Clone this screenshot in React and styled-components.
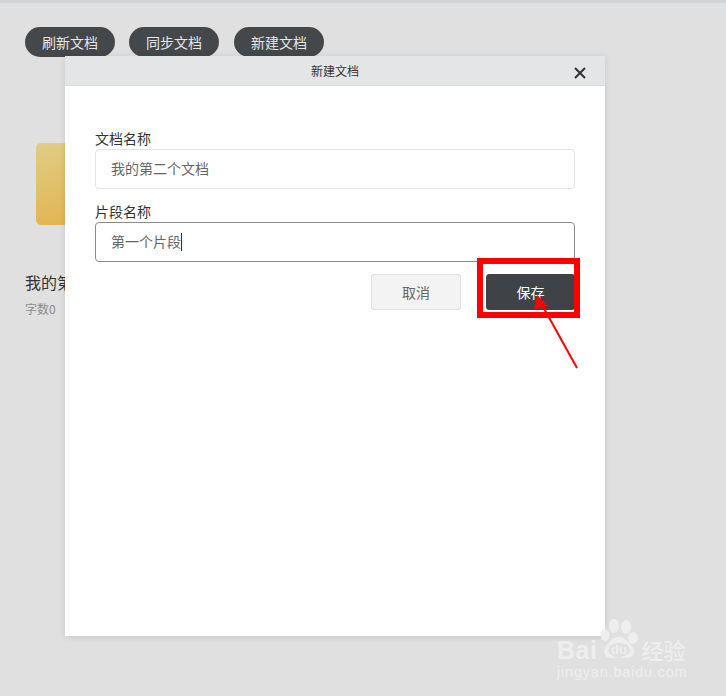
import styled, { createGlobalStyle } from "styled-components";

const cjk = `"Noto Sans CJK SC", "Liberation Sans", sans-serif`;

const GlobalStyle = createGlobalStyle`
  html, body {
    margin: 0;
    padding: 0;
    background: #e0e0e0;
    font-family: ${cjk};
  }
`;

const Page = styled.div`
  position: relative;
  width: 726px;
  height: 696px;
  overflow: hidden;
  background: #e0e0e0;
  border-top: 3px solid #d2d3d5;
  box-sizing: border-box;
`;

const Toolbar = styled.div`
  display: flex;
  gap: 14px;
  padding: 24px 0 0 25px;
`;

const PillButton = styled.button`
  width: 90px;
  height: 30px;
  padding: 0;
  border: 0;
  border-radius: 15px;
  background: #45484a;
  color: #e6e6e6;
  font: 14px/30px ${cjk};
  &:last-child {
    margin-left: 1px;
  }
`;

const DocCard = styled.div`
  padding: 86px 0 0 25px;
`;

const Cover = styled.div`
  width: 120px;
  height: 82px;
  margin-left: 11px;
  border-radius: 5px;
  background: linear-gradient(175deg, #e0cc84, #e2b34f);
`;

const DocTitle = styled.div`
  margin-top: 47px;
  font-size: 16px;
  line-height: 20px;
  color: #333;
`;

const DocMeta = styled.div`
  margin-top: 9px;
  font-size: 12px;
  line-height: 16px;
  color: #8c8c8c;
`;

const Modal = styled.div`
  position: absolute;
  left: 65px;
  top: 53px;
  width: 540px;
  height: 580px;
  background: #fff;
  box-shadow: 0 1px 6px rgba(0, 0, 0, 0.12);
`;

const ModalHeader = styled.div`
  position: relative;
  height: 29px;
  border-bottom: 1px solid #d9d9db;
  background: #e4e5e7;
  color: #333;
  font-size: 12px;
  line-height: 30px;
  text-align: center;
`;

const CloseIcon = styled.svg`
  position: absolute;
  right: 19px;
  top: 11px;
  width: 12px;
  height: 12px;
`;

const Form = styled.div`
  padding: 44px 30px 0;
`;

const Label = styled.div`
  margin-bottom: 2px;
  font-size: 14px;
  line-height: 17px;
  color: #333;
`;

const Field = styled.div`
  box-sizing: border-box;
  height: 40px;
  margin-bottom: 14px;
  padding-left: 15px;
  border: 1px solid ${(p) => (p.$focused ? "#8a8a90" : "#e2e2e8")};
  border-radius: 4px;
  color: #666;
  font-size: 14px;
  line-height: 37px;
`;

const Caret = styled.span`
  display: inline-block;
  width: 1px;
  height: 18px;
  background: #333;
  vertical-align: -4px;
`;

const Actions = styled.div`
  display: flex;
  justify-content: flex-end;
  gap: 25px;
  margin-top: -2px;
`;

const ActionButton = styled.button`
  width: ${(p) => (p.$primary ? "89px" : "90px")};
  height: 36px;
  padding: 0;
  border: 1px solid ${(p) => (p.$primary ? "#3f4347" : "#e2e2e4")};
  border-radius: 3px;
  background: ${(p) => (p.$primary ? "#3f4347" : "#f3f3f3")};
  color: ${(p) => (p.$primary ? "#fff" : "#666")};
  font: 14px/34px ${cjk};
`;

const Highlight = styled.div`
  position: absolute;
  left: 477px;
  top: 255px;
  width: 103px;
  height: 60px;
  box-sizing: border-box;
  border: 6px solid #fe0000;
`;

const Arrow = styled.svg`
  position: absolute;
  left: 525px;
  top: 285px;
  width: 60px;
  height: 85px;
`;

const Watermark = styled.div`
  position: absolute;
  left: 557px;
  top: 615px;
  width: 140px;
  color: #eeeeee;
`;

const BrandRow = styled.div`
  display: flex;
  align-items: flex-end;
  height: 43px;
  font: bold 25px/22px "Liberation Sans", sans-serif;
  letter-spacing: 0.5px;
`;

const Paw = styled.svg`
  width: 40px;
  height: 43px;
  margin: 0 0 0 3px;
  flex: none;
`;

const PawText = styled.text`
  font: bold 13px "Liberation Sans", sans-serif;
  letter-spacing: 0;
  fill: currentColor;
`;

const BrandCn = styled.span`
  font: 500 22px/24px ${cjk};
  margin-left: 1px;
  letter-spacing: 0;
  white-space: nowrap;
`;

const BrandUrl = styled.div`
  font: 14.5px/17px "Liberation Sans", sans-serif;
  letter-spacing: 0.8px;
  margin-top: 3px;
  white-space: nowrap;
`;

const App = () => {
  return (
    <Page>
      <GlobalStyle />
      <Toolbar>
        <PillButton>刷新文档</PillButton>
        <PillButton>同步文档</PillButton>
        <PillButton>新建文档</PillButton>
      </Toolbar>

      <DocCard>
        <Cover />
        <DocTitle>我的第二个文档</DocTitle>
        <DocMeta>字数0</DocMeta>
      </DocCard>

      <Modal>
        <ModalHeader>
          新建文档
          <CloseIcon viewBox="0 0 12 12">
            <path d="M1 1l10 10M11 1L1 11" stroke="#333" strokeWidth="2" fill="none" />
          </CloseIcon>
        </ModalHeader>
        <Form>
          <Label>文档名称</Label>
          <Field>我的第二个文档</Field>
          <Label>片段名称</Label>
          <Field $focused>
            第一个片段
            <Caret />
          </Field>
          <Actions>
            <ActionButton>取消</ActionButton>
            <ActionButton $primary>保存</ActionButton>
          </Actions>
        </Form>
      </Modal>

      <Highlight />
      <Arrow viewBox="0 0 60 85">
        <path d="M52 80L16 15" stroke="#fe0000" strokeWidth="2" fill="none" />
        <path d="M12 7L9 22L23 18Z" fill="#fe0000" />
      </Arrow>

      <Watermark>
        <BrandRow>
          Bai
          <Paw viewBox="0 0 40 43">
            <ellipse cx="5" cy="17" rx="4.5" ry="6" fill="currentColor" />
            <ellipse cx="14" cy="8" rx="5" ry="7" fill="currentColor" />
            <ellipse cx="26" cy="9" rx="5" ry="7" fill="currentColor" />
            <ellipse cx="33" cy="20" rx="5" ry="6" fill="currentColor" />
            <path
              d="M19 19c6 0 9 5 13 9 5 6 1 13-6 12-4-1-8-1-13 0-8 1-11-6-7-12 4-4 6-9 13-9z"
              fill="currentColor"
            />
            <ellipse cx="19" cy="32" rx="11" ry="7" fill="#e0e0e0" />
            <PawText x="19" y="36" textAnchor="middle">du</PawText>
          </Paw>
          <BrandCn>经验</BrandCn>
        </BrandRow>
        <BrandUrl>jingyan.baidu.com</BrandUrl>
      </Watermark>
    </Page>
  );
};

export default App;
